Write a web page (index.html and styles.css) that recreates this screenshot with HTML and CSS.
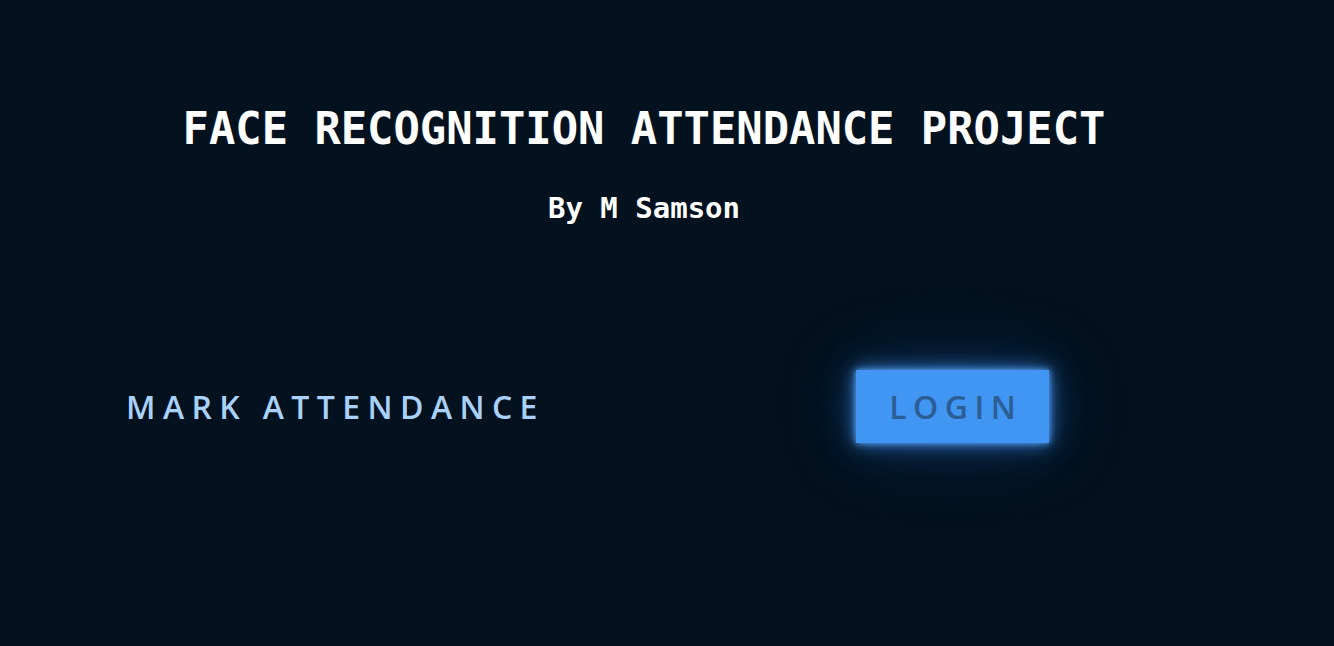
FILE: index.html
```html
<!DOCTYPE html>
<html lang="en">
<head>
<meta charset="utf-8">
<title>Face Recognition Attendance Project</title>
<link rel="stylesheet" href="styles.css">
</head>
<body>
<main class="page">
  <header class="header">
    <h1 class="title">FACE RECOGNITION ATTENDANCE PROJECT</h1>
    <p class="author">By M Samson</p>
  </header>
  <section class="actions">
    <a class="mark-link" href="#">MARK ATTENDANCE</a>
    <a class="login-btn" href="#">LOGIN</a>
  </section>
</main>
</body>
</html>
```
FILE: styles.css
```css
html, body {
  margin: 0;
  padding: 0;
  background: #04121f;
  height: 100%;
  overflow: hidden;
}

.page {
  display: flex;
  flex-direction: column;
  width: 1288px;
}

.header {
  display: flex;
  flex-direction: column;
  align-items: center;
  padding-top: 101px;
}

.title {
  margin: 0;
  font-family: "DejaVu Sans Mono", monospace;
  font-weight: bold;
  font-size: 43.8px;
  line-height: 56px;
  color: #ffffff;
}

.author {
  margin: 33px 0 0;
  font-family: "DejaVu Sans Mono", monospace;
  font-weight: bold;
  font-size: 29px;
  line-height: 36px;
  color: #ffffff;
}

.actions {
  display: flex;
  align-items: center;
  padding-left: 126px;
  margin-top: 144px;
}

.mark-link {
  font-family: "Open Sans", sans-serif;
  font-weight: 600;
  font-size: 32px;
  letter-spacing: 7.4px;
  color: #a9d1fb;
  text-decoration: none;
  width: 730px;
}

.login-btn {
  display: flex;
  align-items: center;
  justify-content: center;
  width: 193px;
  height: 73px;
  box-sizing: border-box;
  background: #4195f3;
  color: #2c5e96;
  font-family: "Open Sans", sans-serif;
  font-weight: 600;
  font-size: 32px;
  letter-spacing: 6.5px;
  text-indent: 6.5px;
  text-decoration: none;
  box-shadow: 0 0 6px rgba(90, 165, 250, 1),
              0 0 16px rgba(70, 150, 243, 0.8),
              0 0 36px rgba(45, 120, 215, 0.4),
              0 0 80px rgba(30, 90, 170, 0.22),
              0 0 180px rgba(20, 70, 140, 0.12);
}
```
